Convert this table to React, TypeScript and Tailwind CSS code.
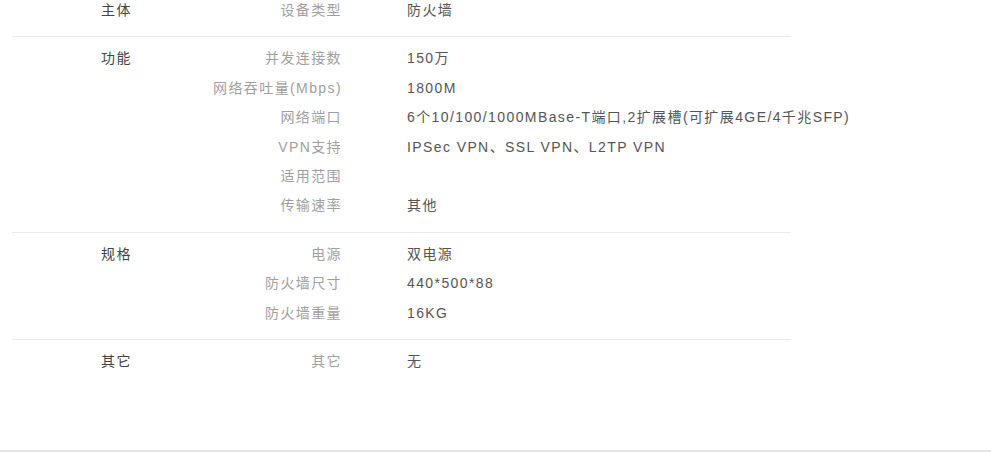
import React from "react";

type Row = [string, string];
type Section = { title: string; rows: Row[] };

const sections: Section[] = [
  { title: "主体", rows: [["设备类型", "防火墙"]] },
  {
    title: "功能",
    rows: [
      ["并发连接数", "150万"],
      ["网络吞吐量(Mbps)", "1800M"],
      ["网络端口", "6个10/100/1000MBase-T端口,2扩展槽(可扩展4GE/4千兆SFP)"],
      ["VPN支持", "IPSec VPN、SSL VPN、L2TP VPN"],
      ["适用范围", ""],
      ["传输速率", "其他"],
    ],
  },
  {
    title: "规格",
    rows: [
      ["电源", "双电源"],
      ["防火墙尺寸", "440*500*88"],
      ["防火墙重量", "16KG"],
    ],
  },
  { title: "其它", rows: [["其它", "无"]] },
];

export default function App() {
  return (
    <div
      className="w-[991px] h-[453px] overflow-hidden bg-white"
      style={{ fontFamily: '"Liberation Sans", Arial, "Noto Sans CJK SC", sans-serif' }}
    >
      <div className="h-[452px] border-b-2 border-[#e6e6e6] overflow-hidden">
        <div className="ml-[12px] w-[779px] mt-[-11px] text-[14px] leading-[29.4px] tracking-[1.4px]">
          {sections.map((s, i) => (
            <div
              key={s.title}
              className={`flex pl-[89px] pt-[7px] pb-[11px] ${i < sections.length - 1 ? "border-b border-[#ebebeb]" : ""}`}
            >
              <div className="w-[100px] shrink-0 text-[#444]">{s.title}</div>
              <div className="flex flex-col">
                {s.rows.map(([k, v], j) => (
                  <div key={j} className="flex h-[29.4px]">
                    <div className="w-[141px] shrink-0 text-right text-[#a0a0a0]">{k}</div>
                    <div className="ml-[65px] whitespace-nowrap text-[#555]">{v}</div>
                  </div>
                ))}
              </div>
            </div>
          ))}
        </div>
      </div>
    </div>
  );
}
